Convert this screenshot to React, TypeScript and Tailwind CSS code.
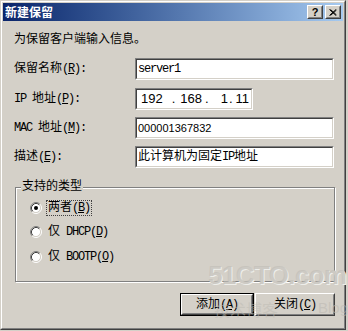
import React from "react";

const uiFont = "font-['Liberation_Mono','Noto_Sans_CJK_SC',monospace]";

// SimSun-like half width latin: squeeze the mono glyphs to 6px advance
function Mixed({ text }: { text: string }) {
  const parts = text.split(/([\u3000-\u303f\u4e00-\u9fff]+)/).filter(Boolean);
  return (
    <>
      {parts.map((p, i) =>
        /[\u3000-\u303f\u4e00-\u9fff]/.test(p) ? (
          <span key={i}>{p}</span>
        ) : (
          <span key={i} className="tracking-[-1.2px] whitespace-pre">
            {p}
          </span>
        )
      )}
    </>
  );
}

function Key({ text, k, colon }: { text: string; k: string; colon?: boolean }) {
  return (
    <span className="whitespace-pre">
      <Mixed text={text} />
      <span className="tracking-[-1.2px]">
        (<span className="underline underline-offset-1">{k}</span>){colon ? ":" : ""}
      </span>
    </span>
  );
}

function Sunken({ className, children }: { className?: string; children?: React.ReactNode }) {
  return (
    <div
      className={`border border-t-[#808080] border-l-[#808080] border-r-white border-b-white ${className ?? ""}`}
    >
      <div className="h-full border border-t-[#404040] border-l-[#404040] border-r-[#d4d0c8] border-b-[#d4d0c8] bg-white flex items-center overflow-hidden">
        {children}
      </div>
    </div>
  );
}

function Radio({ checked }: { checked?: boolean }) {
  return (
    <svg width="12" height="12" viewBox="0 0 12 12" className="shrink-0">
      <circle cx="6" cy="6" r="4.5" fill="#fff" />
      <path d="M2.11 9.89 A5.5 5.5 0 0 1 9.89 2.11" stroke="#808080" fill="none" />
      <path d="M9.89 2.11 A5.5 5.5 0 0 1 2.11 9.89" stroke="#fff" fill="none" />
      <path d="M2.82 9.18 A4.5 4.5 0 0 1 9.18 2.82" stroke="#404040" fill="none" />
      <path d="M9.18 2.82 A4.5 4.5 0 0 1 2.82 9.18" stroke="#d4d0c8" fill="none" />
      {checked && <circle cx="6" cy="6" r="2" fill="#000" />}
    </svg>
  );
}

function CaptionButton({ children }: { children: React.ReactNode }) {
  return (
    <div className="w-[16px] h-[14px] bg-[#d4d0c8] border border-t-white border-l-white border-r-[#404040] border-b-[#404040]">
      <div className="w-full h-full border border-t-[#d4d0c8] border-l-[#d4d0c8] border-r-[#808080] border-b-[#808080] flex items-center justify-center">
        {children}
      </div>
    </div>
  );
}

function Button({ children, primary, width }: { children: React.ReactNode; primary?: boolean; width: string }) {
  return (
    <div className={`${width} h-[23px] ${primary ? "border border-black" : ""}`}>
      <div className="h-full border border-t-white border-l-white border-r-[#404040] border-b-[#404040]">
        <div className="h-full border border-t-[#d4d0c8] border-l-[#d4d0c8] border-r-[#808080] border-b-[#808080] flex items-center justify-center text-[12px] text-black">
          {children}
        </div>
      </div>
    </div>
  );
}

const rows = [
  { label: "保留名称", k: "R" },
  { label: "IP 地址", k: "P" },
  { label: "MAC 地址", k: "M" },
  { label: "描述", k: "E" },
];

export default function App() {
  return (
    <div className={`w-[348px] h-[331px] bg-[#d4d0c8] ${uiFont} text-[12px] text-black relative overflow-hidden`}>
      <div className="w-[346px] h-[330px] border border-t-[#d4d0c8] border-l-[#d4d0c8] border-r-[#404040] border-b-[#404040]">
        <div className="h-full border border-t-white border-l-white border-r-[#808080] border-b-[#808080] p-px flex flex-col">
          {/* title bar */}
          <div className="h-[18px] shrink-0 bg-linear-to-r from-[#0a246a] to-[#a6caf0] flex items-center pl-[2px] pr-[2px]">
            <span className="text-white font-bold text-[12px] leading-none font-['Noto_Sans_CJK_SC',sans-serif]">
              新建保留
            </span>
            <div className="ml-auto flex items-center gap-[2px]">
              <CaptionButton>
                <span className="font-bold text-[11px] leading-none font-['Liberation_Sans',sans-serif]">?</span>
              </CaptionButton>
              <CaptionButton>
                <svg width="8" height="7" viewBox="0 0 8 7">
                  <path d="M0.5 0.5 L7 6.5 M1.5 0.5 L7.5 6 M7 0.5 L0.5 6.5 M7.5 1 L1.5 6.5" stroke="#000" strokeWidth="1" />
                </svg>
              </CaptionButton>
            </div>
          </div>

          {/* body */}
          <div className="flex flex-col pl-[11px] pr-[8px]">
            <div className="mt-[11px] h-[16px] leading-[16px]">为保留客户端输入信息。</div>

            <div className="mt-[10px] flex flex-col">
              {rows.map((r, i) => (
                <div key={r.k} className={`h-[22px] flex items-center ${i === 0 ? "" : i === 1 ? "mt-[8px]" : "mt-[7px]"}`}>
                  <div className="w-[121px] shrink-0">
                    <Key text={r.label} k={r.k} colon />
                  </div>
                  {i === 0 && (
                    <Sunken className="w-[199px] h-[22px]">
                      <span className="pl-[1px] text-[12px] tracking-[-1.2px]">server1</span>
                    </Sunken>
                  )}
                  {i === 1 && (
                    <Sunken className="w-[118px] h-[22px]">
                      <div className="flex items-center whitespace-nowrap text-[13px] font-['Liberation_Sans',sans-serif]">
                        <span className="ml-[4px]">192</span>
                        <span className="ml-[9px]">.</span>
                        <span className="ml-[5px]">168</span>
                        <span className="ml-[3px]">.</span>
                        <span className="ml-[12px]">1</span>
                        <span className="ml-[1px]">.</span>
                        <span className="ml-[3px]">11</span>
                      </div>
                    </Sunken>
                  )}
                  {i === 2 && (
                    <Sunken className="w-[199px] h-[22px]">
                      <span className="pl-[1px] text-[11px] font-['Liberation_Sans',sans-serif]">000001367832</span>
                    </Sunken>
                  )}
                  {i === 3 && (
                    <Sunken className="w-[199px] h-[22px]">
                      <span className="pl-[1px] text-[12px]">
                        <Mixed text="此计算机为固定IP地址" />
                      </span>
                    </Sunken>
                  )}
                </div>
              ))}
            </div>

            {/* group box */}
            <div className="mt-[19px] ml-px h-[95px] relative border border-[#808080] shadow-[inset_1px_1px_0_#fff,1px_1px_0_#fff]">
              <span className="absolute left-[5px] -top-[8px] px-[1px] bg-[#d4d0c8] leading-[14px]">
                支持的类型
              </span>
              <div className="flex flex-col pt-[12px] pl-[14px]">
                <div className="h-[16px] flex items-center gap-[5px]">
                  <Radio checked />
                  <span className="outline-1 outline-dotted outline-[#404040] px-px leading-[14px]">
                    <Key text="两者" k="B" />
                  </span>
                </div>
                <div className="mt-[8px] h-[16px] flex items-center gap-[5px]">
                  <Radio />
                  <span className="px-px"><Key text="仅 DHCP" k="D" /></span>
                </div>
                <div className="mt-[9px] h-[16px] flex items-center gap-[5px]">
                  <Radio />
                  <span className="px-px"><Key text="仅 BOOTP" k="O" /></span>
                </div>
              </div>
            </div>

            {/* buttons */}
            <div className="mt-[11px] flex justify-end gap-[1px]">
              <Button primary width="w-[74px]">
                <Key text="添加" k="A" />
              </Button>
              <Button width="w-[80px]">
                <Key text="关闭" k="C" />
              </Button>
            </div>
          </div>
        </div>
      </div>

      {/* watermark */}
      <div className="absolute left-[208px] top-[262px] pointer-events-none select-none text-[26px] font-bold leading-none tracking-tight text-[#c4c1ba]/80 [text-shadow:1px_1px_0_#eeeeea] font-['Liberation_Sans',sans-serif]">
        51CTO.com
      </div>
      <div className="absolute left-[214px] top-[301px] pointer-events-none select-none text-[16px] leading-none text-[#bdbab3]/50 font-['Noto_Sans_CJK_SC',sans-serif]">
        技术博客
      </div>
      <div className="absolute left-[318px] top-[300px] pointer-events-none select-none text-[15px] leading-none text-[#bdbab3]/60 font-['Liberation_Sans',sans-serif]">
        Blog
      </div>
    </div>
  );
}
